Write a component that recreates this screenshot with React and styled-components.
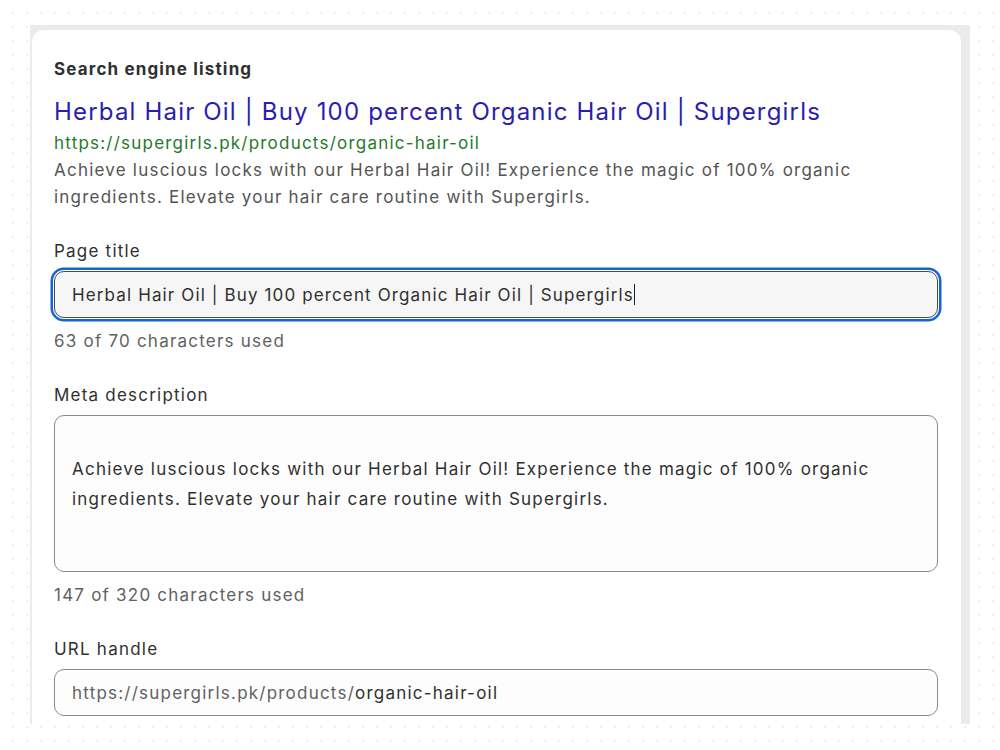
import React from 'react';
import styled, { createGlobalStyle } from 'styled-components';

const GlobalStyle = createGlobalStyle`
  html, body {
    margin: 0;
    padding: 0;
  }

  body {
    width: 1000px;
    height: 750px;
    overflow: hidden;
    background-color: #ffffff;
    background-image: radial-gradient(circle, #efefef 1.3px, transparent 1.6px);
    background-size: 14px 14px;
    background-position: 6px 6px;
    font-family: Inter, 'Noto Sans', sans-serif;
    letter-spacing: 1.22px;
    -webkit-font-smoothing: antialiased;
  }
`;

const Frame = styled.div`
  margin: 25px 0 0 30px;
  width: 940px;
  height: 699px;
  box-sizing: border-box;
  padding: 5px 9px 0 2px;
  background: #ebebeb;
`;

const Card = styled.section`
  height: 100%;
  box-sizing: border-box;
  padding: 27px 23px 0 22px;
  background: #ffffff;
  border-radius: 12px 12px 0 0;
  color: #303030;
`;

const Heading = styled.h2`
  margin: 0;
  font-size: 17px;
  line-height: 24px;
  font-weight: 650;
  letter-spacing: 1.15px;
  color: #303030;
`;

const Preview = styled.div`
  margin-top: 15px;
`;

const PreviewTitle = styled.a`
  display: block;
  font-size: 24px;
  line-height: 32px;
  letter-spacing: 1.18px;
  color: #2a1db0;
  text-decoration: none;
  white-space: nowrap;
`;

const PreviewUrl = styled.div`
  margin-top: 2px;
  font-size: 17px;
  line-height: 26px;
  color: #1f7a2e;
`;

const PreviewText = styled.p`
  margin: 1px 0 0;
  max-width: 870px;
  font-size: 17px;
  line-height: 27px;
  color: #545454;
`;

const Field = styled.div`
  margin-top: ${({ $gap }) => $gap}px;
`;

const Label = styled.label`
  display: block;
  font-size: 17px;
  line-height: 26px;
  color: #303030;
`;

const InputBox = styled.div`
  margin-top: 7px;
  box-sizing: border-box;
  height: 47px;
  display: flex;
  align-items: center;
  padding: 0 17px;
  font-size: 17px;
  letter-spacing: ${({ $focused }) => ($focused ? '1.13px' : '1.22px')};
  color: #303030;
  white-space: nowrap;
  border-radius: 10px;
  border: 1px solid ${({ $focused }) => ($focused ? '#4a4a4a' : '#8a8a8a')};
  background: ${({ $focused }) => ($focused ? '#f6f6f6' : '#fdfdfd')};
  box-shadow: ${({ $focused }) =>
    $focused ? '0 0 0 1px #ffffff, 0 0 0 3.5px #1463d8' : 'none'};
`;

const TextAreaBox = styled.div`
  margin-top: 7px;
  box-sizing: border-box;
  height: 157px;
  padding: 38px 17px 0;
  font-size: 17px;
  line-height: 30px;
  color: #303030;
  border-radius: 10px;
  border: 1px solid #8a8a8a;
  background: #fdfdfd;
`;

const Caret = styled.span`
  display: inline-block;
  width: 0;
  height: 21px;
  border-left: 1.5px solid #202020;
  vertical-align: middle;
`;

const Prefix = styled.span`
  color: #616161;
`;

const HelpText = styled.div`
  margin-top: 10px;
  font-size: 17px;
  line-height: 26px;
  color: #616161;
`;

const title = 'Herbal Hair Oil | Buy 100 percent Organic Hair Oil | Supergirls';
const description =
  'Achieve luscious locks with our Herbal Hair Oil! Experience the magic of 100% organic ingredients. Elevate your hair care routine with Supergirls.';

const App = () => (
  <>
    <GlobalStyle />
    <Frame>
      <Card>
        <Heading>Search engine listing</Heading>
        <Preview>
          <PreviewTitle href="#">{title}</PreviewTitle>
          <PreviewUrl>https://supergirls.pk/products/organic-hair-oil</PreviewUrl>
          <PreviewText>{description}</PreviewText>
        </Preview>

        <Field $gap={27}>
          <Label>Page title</Label>
          <InputBox $focused>
            {title}
            <Caret />
          </InputBox>
          <HelpText>63 of 70 characters used</HelpText>
        </Field>

        <Field $gap={28}>
          <Label>Meta description</Label>
          <TextAreaBox>{description}</TextAreaBox>
          <HelpText>147 of 320 characters used</HelpText>
        </Field>

        <Field $gap={28}>
          <Label>URL handle</Label>
          <InputBox>
            <Prefix>https://supergirls.pk/products/</Prefix>
            organic-hair-oil
          </InputBox>
        </Field>
      </Card>
    </Frame>
  </>
);

export default App;
